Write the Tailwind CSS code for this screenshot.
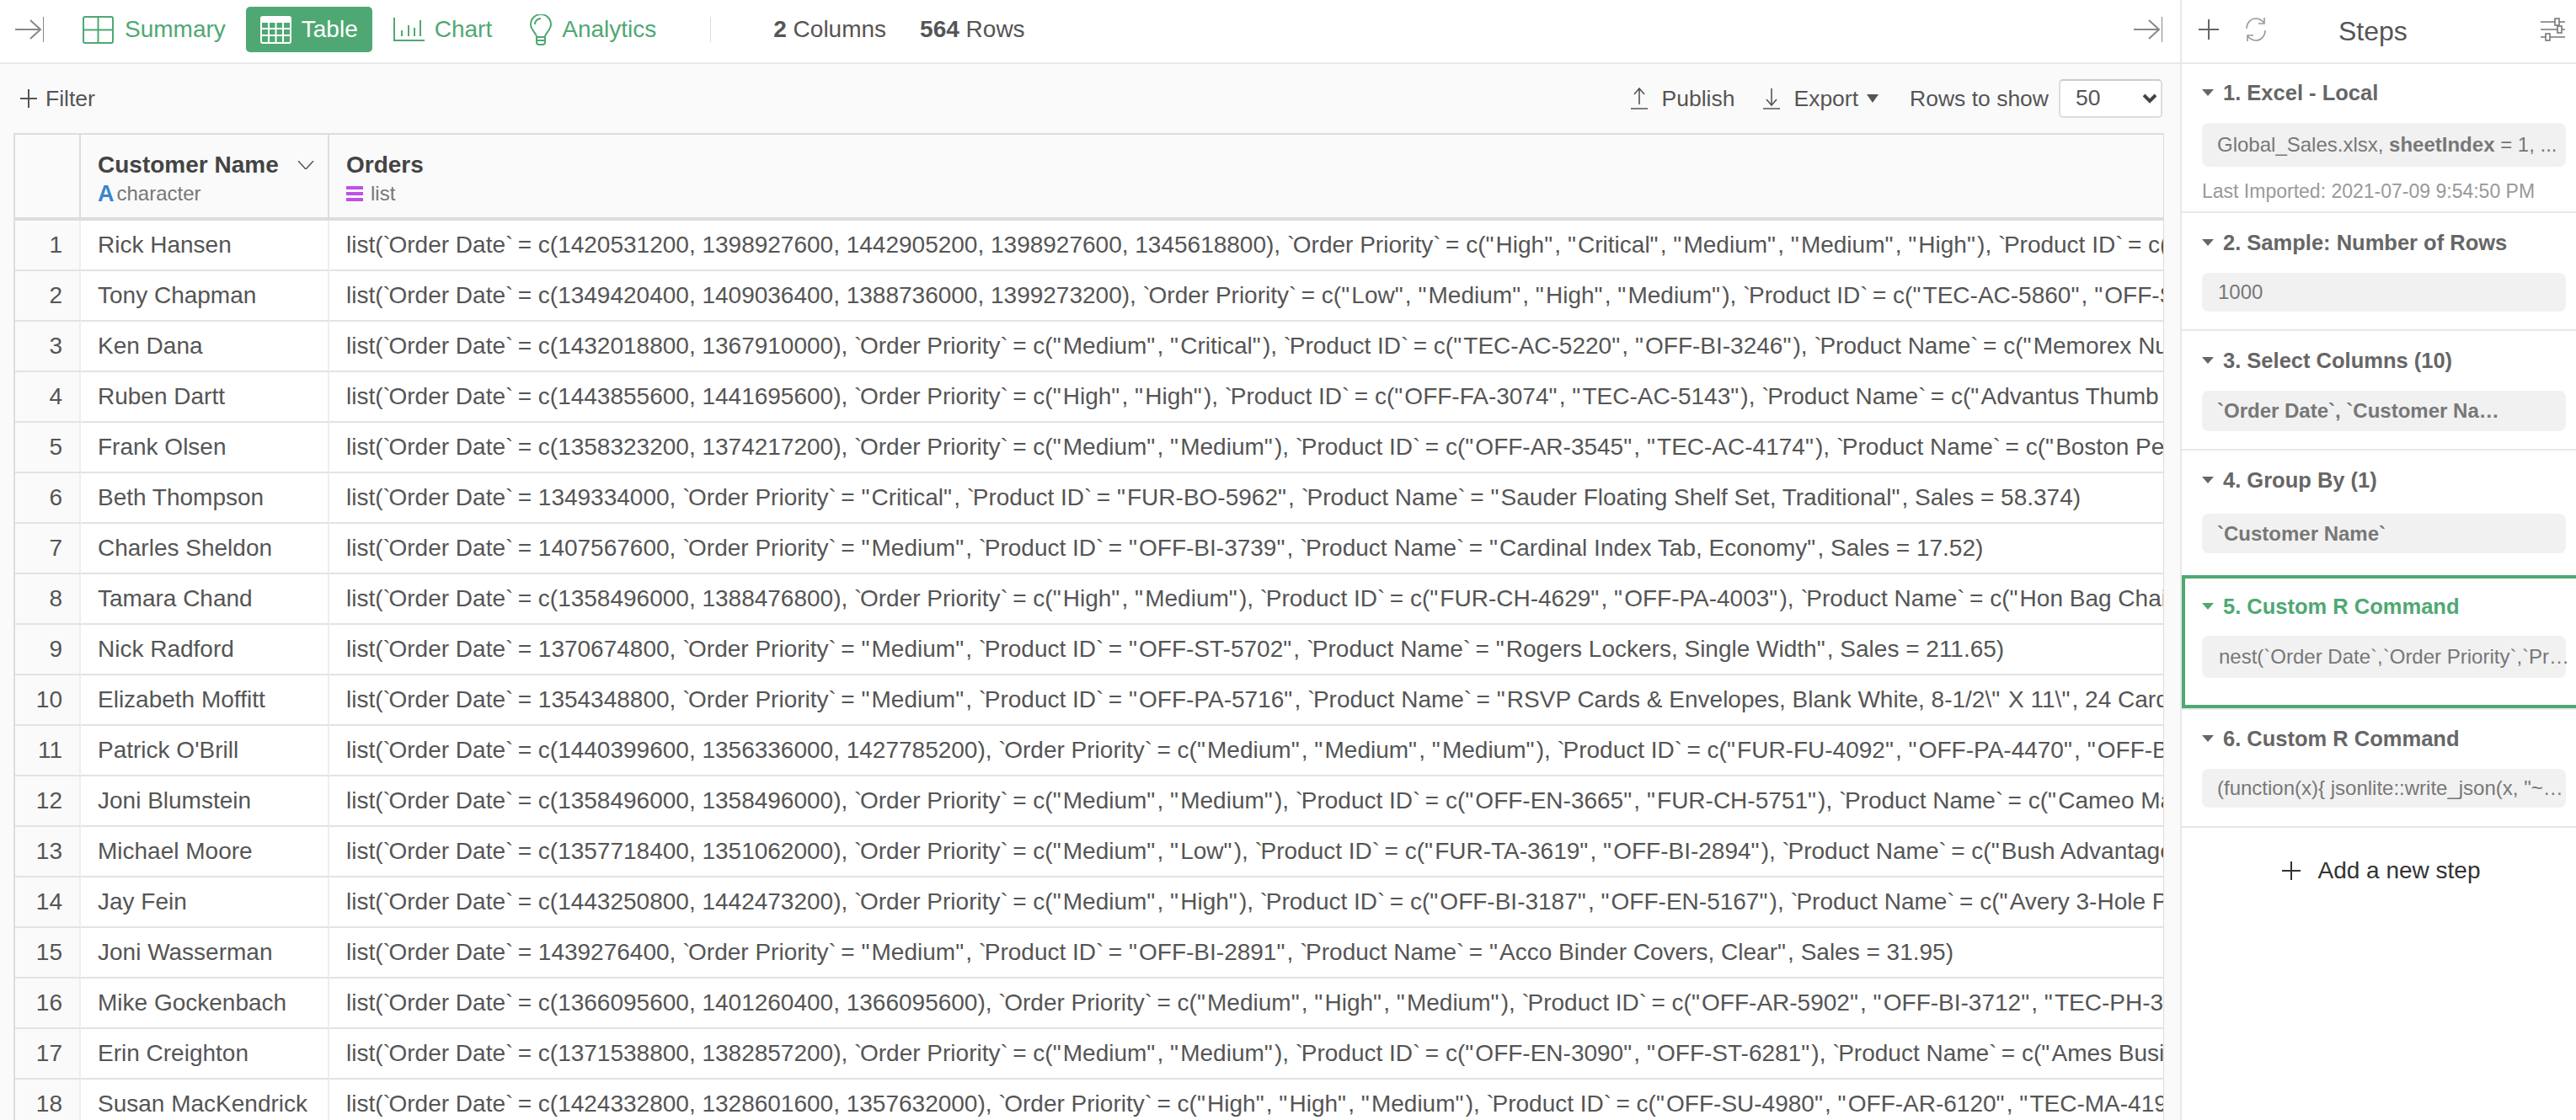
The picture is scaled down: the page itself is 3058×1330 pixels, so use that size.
<!DOCTYPE html>
<html lang="en">
<head>
    <meta charset="UTF-8">
    <title>Steps - Table</title>
    <script src="https://cdn.jsdelivr.net/npm/@tailwindcss/browser@4"></script>
</head>
<body class="h-screen overflow-hidden bg-white font-['Liberation_Sans',Arial,sans-serif] text-[28px] text-[#555]">
<div class="flex h-[1330px] w-[3058px] overflow-hidden">

    <!-- main -->
    <div class="flex w-[2588px] shrink-0 flex-col bg-[#fafafa]">
        <div class="flex h-[76px] shrink-0 items-center border-b-2 border-[#e8e8e8] bg-white pl-[18px] pr-[21px] pb-[4px]">
            <svg class="h-[30px] w-[34px] shrink-0 text-[#888]" viewBox="0 0 34 30" fill="none" stroke="currentColor" stroke-width="2"><path d="M0 15h29M18 4l12 11-12 11M34 0v30"/></svg>
            <div class="ml-[46px] flex items-center text-[#4fa873]">
                <svg class="h-[33px] w-[37px] shrink-0" viewBox="0 0 37 33" fill="none" stroke="currentColor" stroke-width="2"><rect x="1" y="1" width="35" height="31" rx="2"/><path d="M18.5 1v31M1 16.5h35"/></svg>
                <span class="ml-[13px]">Summary</span>
            </div>
            <div class="ml-[24px] flex h-[54px] items-center rounded-[5px] bg-[#4fa873] pl-[17px] pr-[17px] text-white">
                <svg class="h-[33px] w-[37px] shrink-0" viewBox="0 0 37 33" fill="none" stroke="currentColor" stroke-width="2"><rect x="1" y="1" width="35" height="31" rx="2"/><path d="M1 5h35" stroke-width="6"/><path d="M1 15h35M1 23h35M10 1v31M18.5 1v31M27 1v31"/></svg>
                <span class="ml-[12px]">Table</span>
            </div>
            <div class="ml-[25px] flex items-center text-[#4fa873]">
                <svg class="h-[28px] w-[37px] shrink-0" viewBox="0 0 37 28" fill="none" stroke="currentColor" stroke-width="2"><path d="M1 0v27h36" /><path d="M10 15v7M18 9v13M25 12v10M32 3v19"/></svg>
                <span class="ml-[12px]">Chart</span>
            </div>
            <div class="ml-[45px] flex items-center text-[#4fa873]">
                <svg class="h-[37px] w-[26px] shrink-0" viewBox="0 0 26 37" fill="none" stroke="currentColor" stroke-width="2"><path d="M8 27c0-5-7-8-7-15a12 12 0 0 1 24 0c0 7-7 10-7 15z"/><path d="M6 12c0-4 3-7 7-7"/><path d="M8 27v6a3 3 0 0 0 3 3h4a3 3 0 0 0 3-3v-6M8 31h10"/></svg>
                <span class="ml-[12px]">Analytics</span>
            </div>
            <div class="ml-[64px] h-[30px] w-[1px] bg-[#ddd]"></div>
            <div class="ml-[74px]"><b>2</b> Columns</div>
            <div class="ml-[40px]"><b>564</b> Rows</div>
            <svg class="ml-auto h-[30px] w-[34px] shrink-0 text-[#888]" viewBox="0 0 34 30" fill="none" stroke="currentColor" stroke-width="2"><path d="M0 15h29M18 4l12 11-12 11M34 0v30"/></svg>
        </div>

        <div class="flex h-[82px] shrink-0 items-center pl-[24px] pr-[21px] text-[26.5px] text-[#555]">
            <svg class="h-[22px] w-[20px]" viewBox="0 0 20 22" fill="none" stroke="currentColor" stroke-width="2"><path d="M10 0v22M0 11h20"/></svg>
            <span class="ml-[10px] mt-[2px]">Filter</span>
            <div class="ml-auto flex items-center">
                <svg class="h-[26px] w-[20px]" viewBox="0 0 20 26" fill="none" stroke="currentColor" stroke-width="1.6"><path d="M10 20V1M4 8l6-7 6 7M0 25h20"/></svg>
                <span class="ml-[17px] mt-[2px]">Publish</span>
                <svg class="ml-[34px] h-[26px] w-[20px]" viewBox="0 0 20 26" fill="none" stroke="currentColor" stroke-width="1.6"><path d="M10 1v19M4 14l6 7 6-7M0 25h20"/></svg>
                <span class="ml-[16px] mt-[2px]">Export</span>
                <span class="ml-[10px] h-0 w-0 border-x-[7px] border-t-[10px] border-x-transparent border-t-[#555]"></span>
                <span class="ml-[37px] mt-[2px]">Rows to show</span>
                <div class="relative ml-[12px]">
                    <select class="h-[46px] w-[123px] appearance-none rounded-[5px] border-2 border-[#ddd] border-t-[#ccc] bg-white pl-[18px] text-[#555]">
                        <option>50</option>
                    </select>
                    <svg class="pointer-events-none absolute right-[7px] top-[17px] h-[12px] w-[16px]" viewBox="0 0 16 12" fill="none" stroke="#444" stroke-width="4"><path d="M1 2l7 7 7-7"/></svg>
                </div>
            </div>
        </div>

        <div class="ml-[16px] mr-[19px] min-h-0 flex-1 overflow-hidden border-l-2 border-r border-t-2 border-l-[#ddd] border-r-[#ddd] border-t-[#ddd] bg-white">
            <table class="w-full table-fixed border-separate border-spacing-0">
                <colgroup>
                    <col class="w-[78px]">
                    <col class="w-[295px]">
                    <col>
                </colgroup>
                <thead class="bg-[#fafafa]">
                    <tr class="h-[102px]">
                        <th class="border-b-4 border-r-2 border-[#ddd]"></th>
                        <th class="border-b-4 border-r-2 border-[#ddd] pl-[20px] pr-[16px] pt-[6px] text-left align-middle font-normal">
                            <div class="flex items-center justify-between leading-[32px] font-bold text-[#444]">Customer Name
                                <svg class="h-[10px] w-[20px]" viewBox="0 0 20 10" fill="none" stroke="#555" stroke-width="1.5"><path d="M1 0l9 10 9-10"/></svg>
                            </div>
                            <div class="mt-[4px] flex items-center text-[24px] leading-[28px] text-[#777]"><span class="text-[27px] leading-[28px] font-bold text-[#3b86cf]">A</span><span class="ml-[3px]">character</span></div>
                        </th>
                        <th class="border-b-4 border-[#ddd] pl-[20px] pt-[6px] text-left align-middle font-normal">
                            <div class="leading-[32px] font-bold text-[#444]">Orders</div>
                            <div class="mt-[4px] flex items-center text-[24px] leading-[28px] text-[#777]">
                                <svg class="h-[18px] w-[20px]" viewBox="0 0 20 18" fill="#c050e8"><rect width="20" height="4"/><rect y="7" width="20" height="4"/><rect y="14" width="20" height="4"/></svg>
                                <span class="ml-[9px]">list</span>
                            </div>
                        </th>
                    </tr>
                </thead>
                <tbody id="rows">
                    <tr class="h-[60px]"><td class="border-b-2 border-r-2 border-b-[#e3e3e3] border-r-[#eee] bg-[#fafafa] pr-[20px] text-right">1</td><td class="truncate border-b-2 border-r-2 border-b-[#e3e3e3] border-r-[#eee] pl-[20px]">Rick Hansen</td><td class="overflow-hidden whitespace-nowrap border-b-2 border-b-[#e3e3e3] pl-[20px]">list(`Order Date` = c(1420531200, 1398927600, 1442905200, 1398927600, 1345618800), `Order Priority` = c("High", "Critical", "Medium", "Medium", "High"), `Product ID` = c(</td></tr>
                    <tr class="h-[60px]"><td class="border-b-2 border-r-2 border-b-[#e3e3e3] border-r-[#eee] bg-[#fafafa] pr-[20px] text-right">2</td><td class="truncate border-b-2 border-r-2 border-b-[#e3e3e3] border-r-[#eee] pl-[20px]">Tony Chapman</td><td class="overflow-hidden whitespace-nowrap border-b-2 border-b-[#e3e3e3] pl-[20px]">list(`Order Date` = c(1349420400, 1409036400, 1388736000, 1399273200), `Order Priority` = c("Low", "Medium", "High", "Medium"), `Product ID` = c("TEC-AC-5860", "OFF-S</td></tr>
                    <tr class="h-[60px]"><td class="border-b-2 border-r-2 border-b-[#e3e3e3] border-r-[#eee] bg-[#fafafa] pr-[20px] text-right">3</td><td class="truncate border-b-2 border-r-2 border-b-[#e3e3e3] border-r-[#eee] pl-[20px]">Ken Dana</td><td class="overflow-hidden whitespace-nowrap border-b-2 border-b-[#e3e3e3] pl-[20px]">list(`Order Date` = c(1432018800, 1367910000), `Order Priority` = c("Medium", "Critical"), `Product ID` = c("TEC-AC-5220", "OFF-BI-3246"), `Product Name` = c("Memorex Nu</td></tr>
                    <tr class="h-[60px]"><td class="border-b-2 border-r-2 border-b-[#e3e3e3] border-r-[#eee] bg-[#fafafa] pr-[20px] text-right">4</td><td class="truncate border-b-2 border-r-2 border-b-[#e3e3e3] border-r-[#eee] pl-[20px]">Ruben Dartt</td><td class="overflow-hidden whitespace-nowrap border-b-2 border-b-[#e3e3e3] pl-[20px]">list(`Order Date` = c(1443855600, 1441695600), `Order Priority` = c("High", "High"), `Product ID` = c("OFF-FA-3074", "TEC-AC-5143"), `Product Name` = c("Advantus Thumb T</td></tr>
                    <tr class="h-[60px]"><td class="border-b-2 border-r-2 border-b-[#e3e3e3] border-r-[#eee] bg-[#fafafa] pr-[20px] text-right">5</td><td class="truncate border-b-2 border-r-2 border-b-[#e3e3e3] border-r-[#eee] pl-[20px]">Frank Olsen</td><td class="overflow-hidden whitespace-nowrap border-b-2 border-b-[#e3e3e3] pl-[20px]">list(`Order Date` = c(1358323200, 1374217200), `Order Priority` = c("Medium", "Medium"), `Product ID` = c("OFF-AR-3545", "TEC-AC-4174"), `Product Name` = c("Boston Per</td></tr>
                    <tr class="h-[60px]"><td class="border-b-2 border-r-2 border-b-[#e3e3e3] border-r-[#eee] bg-[#fafafa] pr-[20px] text-right">6</td><td class="truncate border-b-2 border-r-2 border-b-[#e3e3e3] border-r-[#eee] pl-[20px]">Beth Thompson</td><td class="overflow-hidden whitespace-nowrap border-b-2 border-b-[#e3e3e3] pl-[20px]">list(`Order Date` = 1349334000, `Order Priority` = "Critical", `Product ID` = "FUR-BO-5962", `Product Name` = "Sauder Floating Shelf Set, Traditional", Sales = 58.374)</td></tr>
                    <tr class="h-[60px]"><td class="border-b-2 border-r-2 border-b-[#e3e3e3] border-r-[#eee] bg-[#fafafa] pr-[20px] text-right">7</td><td class="truncate border-b-2 border-r-2 border-b-[#e3e3e3] border-r-[#eee] pl-[20px]">Charles Sheldon</td><td class="overflow-hidden whitespace-nowrap border-b-2 border-b-[#e3e3e3] pl-[20px]">list(`Order Date` = 1407567600, `Order Priority` = "Medium", `Product ID` = "OFF-BI-3739", `Product Name` = "Cardinal Index Tab, Economy", Sales = 17.52)</td></tr>
                    <tr class="h-[60px]"><td class="border-b-2 border-r-2 border-b-[#e3e3e3] border-r-[#eee] bg-[#fafafa] pr-[20px] text-right">8</td><td class="truncate border-b-2 border-r-2 border-b-[#e3e3e3] border-r-[#eee] pl-[20px]">Tamara Chand</td><td class="overflow-hidden whitespace-nowrap border-b-2 border-b-[#e3e3e3] pl-[20px]">list(`Order Date` = c(1358496000, 1388476800), `Order Priority` = c("High", "Medium"), `Product ID` = c("FUR-CH-4629", "OFF-PA-4003"), `Product Name` = c("Hon Bag Chair</td></tr>
                    <tr class="h-[60px]"><td class="border-b-2 border-r-2 border-b-[#e3e3e3] border-r-[#eee] bg-[#fafafa] pr-[20px] text-right">9</td><td class="truncate border-b-2 border-r-2 border-b-[#e3e3e3] border-r-[#eee] pl-[20px]">Nick Radford</td><td class="overflow-hidden whitespace-nowrap border-b-2 border-b-[#e3e3e3] pl-[20px]">list(`Order Date` = 1370674800, `Order Priority` = "Medium", `Product ID` = "OFF-ST-5702", `Product Name` = "Rogers Lockers, Single Width", Sales = 211.65)</td></tr>
                    <tr class="h-[60px]"><td class="border-b-2 border-r-2 border-b-[#e3e3e3] border-r-[#eee] bg-[#fafafa] pr-[20px] text-right">10</td><td class="truncate border-b-2 border-r-2 border-b-[#e3e3e3] border-r-[#eee] pl-[20px]">Elizabeth Moffitt</td><td class="overflow-hidden whitespace-nowrap border-b-2 border-b-[#e3e3e3] pl-[20px]">list(`Order Date` = 1354348800, `Order Priority` = "Medium", `Product ID` = "OFF-PA-5716", `Product Name` = "RSVP Cards &amp; Envelopes, Blank White, 8-1/2\" X 11\", 24 Card</td></tr>
                    <tr class="h-[60px]"><td class="border-b-2 border-r-2 border-b-[#e3e3e3] border-r-[#eee] bg-[#fafafa] pr-[20px] text-right">11</td><td class="truncate border-b-2 border-r-2 border-b-[#e3e3e3] border-r-[#eee] pl-[20px]">Patrick O'Brill</td><td class="overflow-hidden whitespace-nowrap border-b-2 border-b-[#e3e3e3] pl-[20px]">list(`Order Date` = c(1440399600, 1356336000, 1427785200), `Order Priority` = c("Medium", "Medium", "Medium"), `Product ID` = c("FUR-FU-4092", "OFF-PA-4470", "OFF-B</td></tr>
                    <tr class="h-[60px]"><td class="border-b-2 border-r-2 border-b-[#e3e3e3] border-r-[#eee] bg-[#fafafa] pr-[20px] text-right">12</td><td class="truncate border-b-2 border-r-2 border-b-[#e3e3e3] border-r-[#eee] pl-[20px]">Joni Blumstein</td><td class="overflow-hidden whitespace-nowrap border-b-2 border-b-[#e3e3e3] pl-[20px]">list(`Order Date` = c(1358496000, 1358496000), `Order Priority` = c("Medium", "Medium"), `Product ID` = c("OFF-EN-3665", "FUR-CH-5751"), `Product Name` = c("Cameo Ma</td></tr>
                    <tr class="h-[60px]"><td class="border-b-2 border-r-2 border-b-[#e3e3e3] border-r-[#eee] bg-[#fafafa] pr-[20px] text-right">13</td><td class="truncate border-b-2 border-r-2 border-b-[#e3e3e3] border-r-[#eee] pl-[20px]">Michael Moore</td><td class="overflow-hidden whitespace-nowrap border-b-2 border-b-[#e3e3e3] pl-[20px]">list(`Order Date` = c(1357718400, 1351062000), `Order Priority` = c("Medium", "Low"), `Product ID` = c("FUR-TA-3619", "OFF-BI-2894"), `Product Name` = c("Bush Advantage</td></tr>
                    <tr class="h-[60px]"><td class="border-b-2 border-r-2 border-b-[#e3e3e3] border-r-[#eee] bg-[#fafafa] pr-[20px] text-right">14</td><td class="truncate border-b-2 border-r-2 border-b-[#e3e3e3] border-r-[#eee] pl-[20px]">Jay Fein</td><td class="overflow-hidden whitespace-nowrap border-b-2 border-b-[#e3e3e3] pl-[20px]">list(`Order Date` = c(1443250800, 1442473200), `Order Priority` = c("Medium", "High"), `Product ID` = c("OFF-BI-3187", "OFF-EN-5167"), `Product Name` = c("Avery 3-Hole Pu</td></tr>
                    <tr class="h-[60px]"><td class="border-b-2 border-r-2 border-b-[#e3e3e3] border-r-[#eee] bg-[#fafafa] pr-[20px] text-right">15</td><td class="truncate border-b-2 border-r-2 border-b-[#e3e3e3] border-r-[#eee] pl-[20px]">Joni Wasserman</td><td class="overflow-hidden whitespace-nowrap border-b-2 border-b-[#e3e3e3] pl-[20px]">list(`Order Date` = 1439276400, `Order Priority` = "Medium", `Product ID` = "OFF-BI-2891", `Product Name` = "Acco Binder Covers, Clear", Sales = 31.95)</td></tr>
                    <tr class="h-[60px]"><td class="border-b-2 border-r-2 border-b-[#e3e3e3] border-r-[#eee] bg-[#fafafa] pr-[20px] text-right">16</td><td class="truncate border-b-2 border-r-2 border-b-[#e3e3e3] border-r-[#eee] pl-[20px]">Mike Gockenbach</td><td class="overflow-hidden whitespace-nowrap border-b-2 border-b-[#e3e3e3] pl-[20px]">list(`Order Date` = c(1366095600, 1401260400, 1366095600), `Order Priority` = c("Medium", "High", "Medium"), `Product ID` = c("OFF-AR-5902", "OFF-BI-3712", "TEC-PH-31</td></tr>
                    <tr class="h-[60px]"><td class="border-b-2 border-r-2 border-b-[#e3e3e3] border-r-[#eee] bg-[#fafafa] pr-[20px] text-right">17</td><td class="truncate border-b-2 border-r-2 border-b-[#e3e3e3] border-r-[#eee] pl-[20px]">Erin Creighton</td><td class="overflow-hidden whitespace-nowrap border-b-2 border-b-[#e3e3e3] pl-[20px]">list(`Order Date` = c(1371538800, 1382857200), `Order Priority` = c("Medium", "Medium"), `Product ID` = c("OFF-EN-3090", "OFF-ST-6281"), `Product Name` = c("Ames Busin</td></tr>
                    <tr class="h-[60px]"><td class="border-b-2 border-r-2 border-b-[#e3e3e3] border-r-[#eee] bg-[#fafafa] pr-[20px] text-right">18</td><td class="truncate border-b-2 border-r-2 border-b-[#e3e3e3] border-r-[#eee] pl-[20px]">Susan MacKendrick</td><td class="overflow-hidden whitespace-nowrap border-b-2 border-b-[#e3e3e3] pl-[20px]">list(`Order Date` = c(1424332800, 1328601600, 1357632000), `Order Priority` = c("High", "High", "Medium"), `Product ID` = c("OFF-SU-4980", "OFF-AR-6120", "TEC-MA-419</td></tr>
                </tbody>
            </table>
        </div>
    </div>

    <!-- steps panel -->
    <div class="flex min-w-0 flex-1 flex-col border-l-2 border-[#e8e8e8] bg-white">
        <div class="relative flex h-[76px] shrink-0 items-center border-b-2 border-[#e8e8e8] pl-[20px] pb-[4px]">
            <svg class="h-[24px] w-[24px] text-[#666]" viewBox="0 0 24 24" fill="none" stroke="currentColor" stroke-width="2"><path d="M12 0v24M0 12h24"/></svg>
            <svg class="ml-[30px] h-[30px] w-[28px] text-[#999]" viewBox="0 0 28 30" fill="none" stroke="currentColor" stroke-width="1.6"><path d="M3 14c0-7 5-12 11-12 4 0 7 2 10 5M24 1v7h-7M25 16c0 7-5 12-11 12-4 0-7-2-10-5M4 29v-7h7"/></svg>
            <span class="ml-[84px] mt-[3px] text-[32px] text-[#555]">Steps</span>
            <svg class="ml-auto mr-[13px] h-[30px] w-[29px] text-[#777]" viewBox="0 0 29 30" fill="none" stroke="currentColor" stroke-width="1.6"><path d="M0 6h29M0 15h29M0 24h29"/><rect x="17" y="2" width="5" height="8" fill="#fff"/><rect x="20" y="11" width="5" height="8" fill="#fff"/><rect x="6" y="20" width="5" height="8" fill="#fff"/></svg>
        </div>

        <div class="h-[177px] border-b-2 border-[#e8e8e8] pl-[24px] pr-[12px] pt-[22px]">
            <div class="flex h-[24px] items-center text-[25.5px] font-bold text-[#666]"><span class="mr-[11px] h-0 w-0 border-x-[7px] border-t-[8px] border-x-transparent border-t-[#666]"></span>1. Excel - Local</div>
            <div class="mt-[24px] flex h-[52px] items-center overflow-hidden whitespace-nowrap rounded-[8px] bg-[#f1f1f1] pl-[18px] text-[24px] text-[#777]">Global_Sales.xlsx,&nbsp;<b>sheetIndex</b>&nbsp;= 1, ...</div>
            <div class="mt-[17px] text-[23px] leading-[24px] text-[#999]">Last Imported: 2021-07-09 9:54:50 PM</div>
        </div>

        <div class="h-[140px] border-b-2 border-[#e8e8e8] pl-[24px] pr-[12px] pt-[23px]">
            <div class="flex h-[24px] items-center text-[25.5px] font-bold text-[#666]"><span class="mr-[11px] h-0 w-0 border-x-[7px] border-t-[8px] border-x-transparent border-t-[#666]"></span>2. Sample: Number of Rows</div>
            <div class="mt-[24px] flex h-[46px] items-center rounded-[8px] bg-[#f1f1f1] pl-[19px] text-[24px] text-[#777]">1000</div>
        </div>

        <div class="h-[142px] border-b-2 border-[#e8e8e8] pl-[24px] pr-[12px] pt-[23px]">
            <div class="flex h-[24px] items-center text-[25.5px] font-bold text-[#666]"><span class="mr-[11px] h-0 w-0 border-x-[7px] border-t-[8px] border-x-transparent border-t-[#666]"></span>3. Select Columns (10)</div>
            <div class="mt-[24px] flex h-[48px] items-center rounded-[8px] bg-[#f1f1f1] pl-[18px] text-[24px] font-bold text-[#777]">`Order Date`, `Customer Na…</div>
        </div>

        <div class="h-[148px] pl-[24px] pr-[12px] pt-[23px]">
            <div class="flex h-[24px] items-center text-[25.5px] font-bold text-[#666]"><span class="mr-[11px] h-0 w-0 border-x-[7px] border-t-[8px] border-x-transparent border-t-[#666]"></span>4. Group By (1)</div>
            <div class="mt-[28px] flex h-[47px] items-center rounded-[8px] bg-[#f1f1f1] pl-[18px] text-[24px] font-bold text-[#777]">`Customer Name`</div>
        </div>

        <div class="h-[158px] border-y-4 border-l-4 border-[#4fa873] pl-[20px] pr-[12px] pt-[21px]">
            <div class="flex h-[24px] items-center text-[25.5px] font-bold text-[#4fa873]"><span class="mr-[11px] h-0 w-0 border-x-[7px] border-t-[8px] border-x-transparent border-t-[#4fa873]"></span>5. Custom R Command</div>
            <div class="mt-[23px] flex h-[50px] items-center whitespace-nowrap rounded-[8px] bg-[#f1f1f1] pl-[20px] text-[24px] text-[#777]">nest(`Order Date`,`Order Priority`,`Pr…</div>
        </div>

        <div class="h-[142px] border-y-2 border-b-[#e8e8e8] border-t-[#e8e8e8] pl-[24px] pr-[12px] pt-[22px]">
            <div class="flex h-[24px] items-center text-[25.5px] font-bold text-[#666]"><span class="mr-[11px] h-0 w-0 border-x-[7px] border-t-[8px] border-x-transparent border-t-[#666]"></span>6. Custom R Command</div>
            <div class="mt-[24px] flex h-[46px] items-center whitespace-nowrap rounded-[8px] bg-[#f1f1f1] pl-[18px] text-[24px] text-[#777]">(function(x){ jsonlite::write_json(x, "~…</div>
        </div>

        <div class="mt-[30px] flex items-center justify-center pl-[6px] text-[#333]">
            <svg class="h-[22px] w-[22px]" viewBox="0 0 22 22" fill="none" stroke="currentColor" stroke-width="2"><path d="M11 0v22M0 11h22"/></svg>
            <span class="ml-[20px]">Add a new step</span>
        </div>
    </div>
</div>
<script>
    // backticks are narrower and quotes wider in the original font
    document.querySelectorAll('#rows td:last-child').forEach(td => {
        td.innerHTML = td.innerHTML.replace(/[`"]/g, ch =>
            ch === '`' ? '<span class="tracking-[-2.4px]">`</span>' : '<span class="tracking-[2.2px]">"</span>');
    });
</script>
</body>
</html>
